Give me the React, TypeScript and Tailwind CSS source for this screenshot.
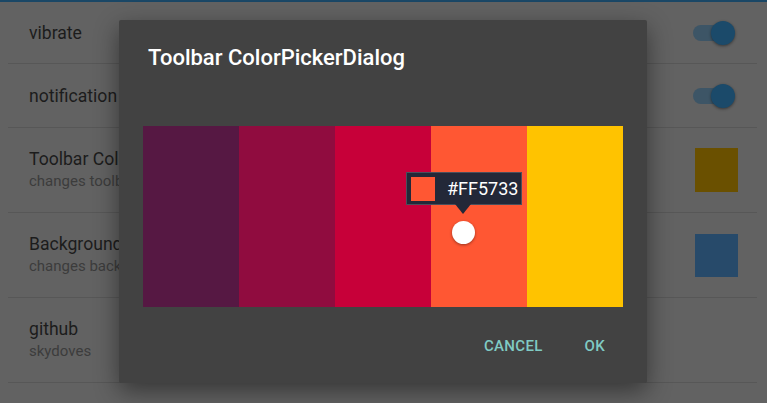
import React from "react";

function Toggle() {
  return (
    <div className="relative w-[42px] h-[24px] flex items-center">
      <div className="w-[40px] h-[16px] rounded-full bg-[#3d5566] ml-[1px]" />
      <div className="absolute right-[-1px] top-0 w-[24px] h-[24px] rounded-full bg-[#1b4a6a] shadow-[0_1px_3px_rgba(0,0,0,0.45)]" />
    </div>
  );
}

function Divider() {
  return <div className="h-px bg-[#575757] ml-[8px] mr-[10px]" />;
}

function Row({ title, sub, right, h }: { title: string; sub?: string; right?: React.ReactNode; h: string }) {
  return (
    <div className={`flex items-center justify-between pl-[29px] pr-[29px] ${h}`}>
      <div className="flex flex-col">
        <div className="text-[17.6px] leading-[22px] text-[#1c1c1c]">{title}</div>
        {sub && <div className="text-[15px] leading-[22px] text-[#3c3c3c]">{sub}</div>}
      </div>
      {right}
    </div>
  );
}

export default function App() {
  const colors = ["#561843", "#900c3f", "#c70039", "#ff5733", "#ffc300"];
  return (
    <div
      className="relative w-[767px] h-[403px] overflow-hidden bg-[#626262]"
      style={{ fontFamily: "Roboto, 'Noto Sans', sans-serif" }}
    >
      <div className="h-[2px] bg-[#1a4766]" />
      <Row h="h-[61px]" title="vibrate" right={<div className="mr-[4px]"><Toggle /></div>} />
      <Divider />
      <Row h="h-[63px]" title="notification" right={<div className="mr-[4px]"><Toggle /></div>} />
      <Divider />
      <Row
        h="h-[84px]"
        title="Toolbar Color"
        sub="changes toolbar color"
        right={<div className="w-[43px] h-[44px] bg-[#6a5000]" />}
      />
      <Divider />
      <Row
        h="h-[84px]"
        title="Background Color"
        sub="changes background color"
        right={<div className="w-[43px] h-[43px] bg-[#274a6a]" />}
      />
      <Divider />
      <Row h="h-[84px]" title="github" sub="skydoves" />
      <Divider />

      {/* Dialog */}
      <div className="absolute left-[119px] top-[20px] w-[528px] h-[363px] bg-[#424242] rounded-[2px] shadow-[0_8px_24px_rgba(0,0,0,0.45)] flex flex-col">
        <div className="pl-[29px] pt-[25px] text-[22px] leading-[26px] font-medium text-white">
          Toolbar ColorPickerDialog
        </div>
        <div className="mt-[55px] mx-[24px] h-[181px] relative flex">
          {colors.map((c) => (
            <div key={c} className="flex-1" style={{ backgroundColor: c }} />
          ))}
          {/* tooltip */}
          <div className="absolute left-[263px] top-[46px] flex flex-col items-center">
            <div className="w-[116px] h-[33px] bg-[#232838] border border-[#4a4f5c] flex items-center pl-[4px]">
              <div className="w-[24px] h-[24px] bg-[#ff5733]" />
              <span className="ml-[12px] text-[18px] leading-[20px] text-white">#FF5733</span>
            </div>
          </div>
          <div className="absolute left-[312px] top-[78px] w-0 h-0 border-l-[8px] border-r-[8px] border-t-[10px] border-l-transparent border-r-transparent border-t-[#232838]" />
          <div className="absolute left-[309px] top-[95px] w-[23px] h-[23px] rounded-full bg-white shadow-[0_1px_3px_rgba(0,0,0,0.4)]" />
        </div>
        <div className="flex justify-end items-center mt-[28px] pr-[42px] gap-[42px] text-[15px] font-medium text-[#80cbc4] tracking-[0.3px]">
          <span>CANCEL</span>
          <span>OK</span>
        </div>
      </div>
    </div>
  );
}
